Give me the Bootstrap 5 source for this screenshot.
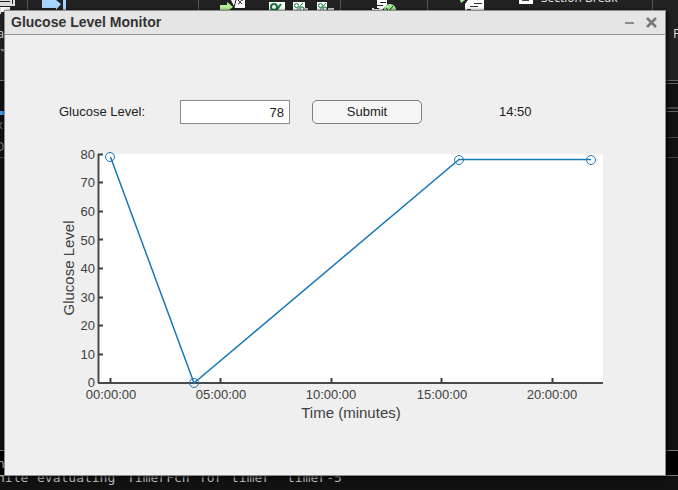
<!DOCTYPE html>
<html lang="en">
<head>
<meta charset="utf-8">
<meta name="viewport" content="width=device-width, initial-scale=1">
<title>Glucose Level Monitor</title>
<link href="https://cdn.jsdelivr.net/npm/bootstrap@5.3.0/dist/css/bootstrap.min.css" rel="stylesheet">
<style>
body { background: #111; font-family: "Liberation Sans", Arial, sans-serif; font-size: 13px; line-height: 18px; color: #222; }
.backdrop { z-index: 0; }
.app-window { z-index: 1; margin: 10px 12px 14px 4px; background: #efefef; border: 1px solid #8d8d8d; box-shadow: 1px 1px 4px #000; }
.title-bar { height: 24px; background: #e5e5e5; border-bottom: 1px solid #92958f; padding: 0 2px 2px 6px; }
.title-bar h1 { font-size: 14px; line-height: 20px; color: #333; }
.win-btn { width: 22px; height: 20px; line-height: 0; }
.controls { display: grid; grid-template-columns: 175fr 110fr 22fr 110fr 56fr 187fr; padding-top: 65px; }
.controls label { padding-left: 54px; white-space: nowrap; }
.level-input { height: 24px; border: 1px solid #8c8c8c; padding: 0 5px; font-size: 13px; line-height: 18px; text-align: right; color: #222; }
.submit-btn { grid-column: 4; height: 24px; border: 1px solid #7d7d7d; border-radius: 5px; background: #f5f5f5; padding: 0; font-size: 13px; line-height: 18px; color: #222; }
.clock { grid-column: 6; padding-left: 21px; }
.plot-text { font-size: 13px; fill: #404040; }
.plot-title { font-size: 15px; fill: #404040; }
</style>
<script src="https://cdn.jsdelivr.net/npm/bootstrap@5.3.0/dist/js/bootstrap.bundle.min.js"></script>
</head>
<body class="position-relative min-vh-100 d-flex flex-column overflow-hidden">

<!-- Application behind the dialog -->
<svg class="backdrop position-absolute top-0 start-0 w-100 h-100" aria-hidden="true">
  <rect width="100%" height="80" fill="#222"/>
  <rect y="80" width="100%" height="410" fill="#111"/>
  <path d="M27.500 0V10M198.500 0V10M340.500 0V10M427.500 0V10M652.500 0V10" stroke="#555"/>
  <!-- save -->
  <path d="M0 0H11V3H0M0 5H14V0M0 14V8H5" fill="none" stroke="#ddd" stroke-width="2"/>
  <rect x="1" y="7" width="9" height="5" fill="#fff"/>
  <!-- import arrow -->
  <path d="M42 0H56L61 4L56 10V8H42Z" fill="#a9d4ff"/><rect x="63" y="0" width="3" height="10" fill="#a9d4ff"/>
  <!-- function -->
  <path d="M231 0H245V8H235Z" fill="#fff"/>
  <path d="M234 7L236 0M238 4C241 4 239 0 243 0M238 0L242 4" fill="none" stroke="#222"/>
  <path d="M220 5H227V2L233 7L229 10H220Z" fill="#b5f29a"/>
  <!-- percent tools -->
  <path d="M269 2H285V10H269ZM293 2H305V10H293ZM317 2H327V10H317Z" fill="#fff"/>
  <path d="M304 9H308M328 9H334" stroke="#ccc" stroke-width="2"/>
  <g fill="none" stroke="#167339" stroke-width="2"><ellipse cx="274" cy="7" rx="3" ry="3"/><path d="M281 4L276 11"/></g>
  <g fill="none" stroke="#167339"><circle cx="296.500" cy="5.500" r="2"/><path d="M303 3L296 11"/><circle cx="302" cy="9" r="2"/><circle cx="320.500" cy="5.500" r="2"/><path d="M326 3L319 11"/><circle cx="325" cy="9" r="2"/></g>
  <!-- run check -->
  <path d="M377 0H387V5L382 10H372V8H377Z" fill="#fff"/>
  <path d="M380 2.500H386M376 5.500H383M374 8.500H379" stroke="#222"/>
  <circle cx="390" cy="10" r="6" fill="#a6ec95"/><path d="M386 8L389 11L393 6" fill="none" stroke="#222"/>
  <!-- script -->
  <path d="M460 0H465L461 3Z" fill="#a6ec95"/><path d="M465 0H484V10H465V4L468 0Z" fill="#fff"/>
  <path d="M474 3.500H482M470 6.500H478M467 9.500H471" stroke="#334"/>
  <!-- section break -->
  <path d="M519 0H533V4H519Z" fill="#fff"/><path d="M522 0.500H529" stroke="#444"/>
  <text x="541" y="2" font-family="Open Sans, sans-serif" font-size="12" fill="#e5e5e5">Section Break</text>
  <text x="673" y="38" font-family="Open Sans, sans-serif" font-size="13" fill="#ddd">P</text>
  <text x="-3" y="38" font-family="Open Sans, sans-serif" font-size="13" fill="#ddd">a</text>
  <path d="M0 49H5L3 52Z" fill="#888"/>
  <path d="M0 80.500H5" stroke="#777"/><path d="M0 113H5" stroke="#3f9ae5" stroke-width="4"/>
  <text x="-4" y="129" font-family="Open Sans, sans-serif" font-size="13" fill="#777">x</text>
  <text x="-5" y="151" font-family="Open Sans, sans-serif" font-size="13" fill="#888370">D</text>
  <path d="M0 157.500H5" stroke="#444"/>
  <path d="M666 80.500H678M666 83.500H678M666 111.500H678" stroke="#666"/>
  <path d="M666 108H678" stroke="#444" stroke-width="2"/>
  <path d="M666 137.500H678M666 157.500H678" stroke="#444"/>
  <path d="M0 451H5V475H0ZM666 451H678V475H666Z" fill="#000"/>
  <path d="M0 450.500H5M666 450.500H678M666 475.500H678M0 475.500H5" stroke="#777"/>
  <g font-family="DejaVu Sans Mono, monospace" font-size="13" fill="#bdbdbd">
    <text x="-3" y="468">n</text>
    <text y="482"><tspan x="-3">hile</tspan><tspan x="37">evaluating</tspan><tspan x="127">TimerFcn</tspan><tspan x="199">for</tspan><tspan x="231">timer</tspan><tspan x="287">timer-5</tspan></text>
  </g>
</svg>

<main class="app-window position-relative flex-grow-1">
  <header class="title-bar d-flex align-items-center justify-content-between">
    <h1 class="fw-bold m-0">Glucose Level Monitor</h1>
    <div class="d-flex">
      <button type="button" class="win-btn btn p-0 border-0" aria-label="Minimize"><svg width="12" height="12"><path d="M1 7H10" stroke="#8c8c8c" stroke-width="2"/></svg></button>
      <button type="button" class="win-btn btn p-0 border-0" aria-label="Close"><svg width="12" height="12"><path d="M1 2L10 11M10 2L1 11" stroke="#777" stroke-width="2.500"/></svg></button>
    </div>
  </header>

  <form class="controls align-items-center">
    <label for="level">Glucose Level:</label>
    <input id="level" class="level-input form-control rounded-0" type="text" inputmode="numeric" value="78">
    <button type="button" class="submit-btn btn">Submit</button>
    <output class="clock">14:50</output>
  </form>

  <!-- Readings plotted over elapsed time -->
  <svg class="d-block w-100" viewBox="0 0 660 300" role="img" aria-label="Glucose level over time">
    <rect x="93" y="30" width="505" height="229" fill="#fff"/>
    <path d="M93.500 30V259M93 259H598" fill="none" stroke="#4a4a4a" stroke-width="2"/>
    <path d="M93 30.500H98M93 58.500H98M93 87.500H98M93 115.500H98M93 144.500H98M93 173.500H98M93 201.500H98M93 230.500H98M105.500 259V254M215.500 259V254M326.500 259V254M436.500 259V254M547.500 259V254" stroke="#404040" stroke-width="2"/>
    <g class="plot-text" text-anchor="end">
      <text x="90" y="35">80</text><text x="90" y="63">70</text><text x="90" y="92">60</text><text x="90" y="121">50</text><text x="90" y="149">40</text><text x="90" y="178">30</text><text x="90" y="206">20</text><text x="90" y="235">10</text><text x="90" y="263">0</text>
    </g>
    <g class="plot-text" text-anchor="middle">
      <text x="106" y="275">00:00:00</text><text x="216" y="275">05:00:00</text><text x="326" y="275">10:00:00</text><text x="437" y="275">15:00:00</text><text x="547" y="275">20:00:00</text>
    </g>
    <text class="plot-title" x="346" y="294" text-anchor="middle">Time (minutes)</text>
    <text class="plot-title" transform="translate(69 144) rotate(-90)" text-anchor="middle">Glucose Level</text>
    <g fill="none" stroke="#1877b8">
      <path d="M105.500 33L189 259L454 35.500H586" stroke-width="1.500"/>
      <circle cx="105" cy="33" r="4.500"/><circle cx="189" cy="259" r="4.500"/><circle cx="454" cy="36" r="4.500"/><circle cx="586" cy="36" r="4.500"/>
    </g>
  </svg>
</main>
</body>
</html>
